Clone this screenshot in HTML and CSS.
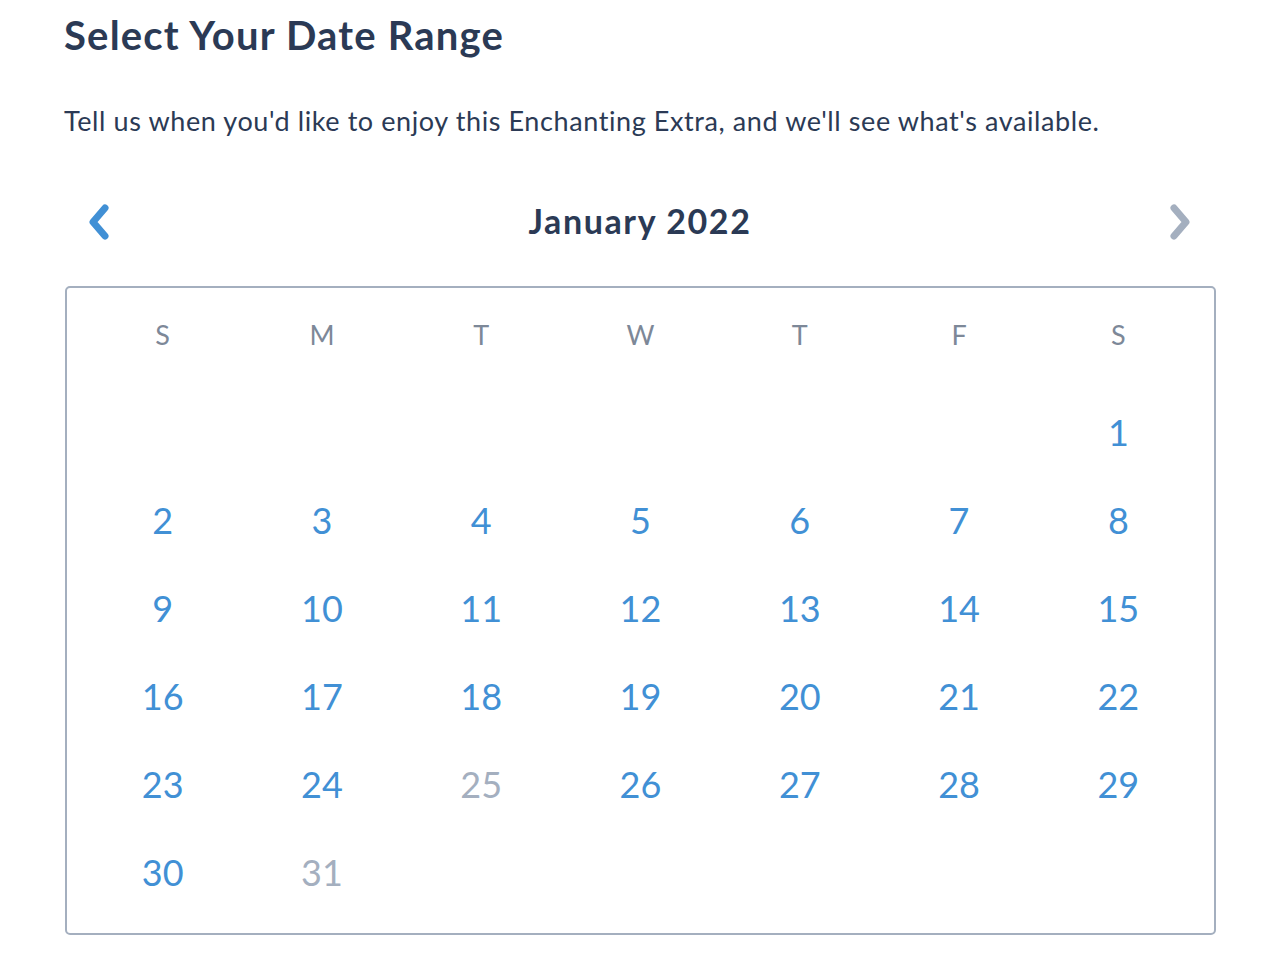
FILE: index.html
```html
<!DOCTYPE html>
<html lang="en">
<head>
<meta charset="utf-8">
<title>Select Your Date Range</title>
<link rel="stylesheet" href="styles.css">
</head>
<body>
<main class="page">
  <h1 class="title">Select Your Date Range</h1>
  <p class="intro">Tell us when you'd like to enjoy this Enchanting Extra, and we'll see what's available.</p>
  <div class="month-nav">
    <button class="nav-btn prev" aria-label="Previous month">
      <svg width="30" height="40" viewBox="0 0 30 40"><polyline points="21,6 9,20 21,34" fill="none" stroke="#4190d5" stroke-width="7" stroke-linecap="round" stroke-linejoin="round"/></svg>
    </button>
    <h2 class="month">January 2022</h2>
    <button class="nav-btn next" aria-label="Next month">
      <svg width="30" height="40" viewBox="0 0 30 40"><polyline points="8,6 20,20 8,34" fill="none" stroke="#a4afbf" stroke-width="7" stroke-linecap="round" stroke-linejoin="round"/></svg>
    </button>
  </div>
  <div class="calendar">
    <div class="grid weekdays">
      <span>S</span><span>M</span><span>T</span><span>W</span><span>T</span><span>F</span><span>S</span>
    </div>
    <div class="grid days">
      <span></span><span></span><span></span><span></span><span></span><span></span><span class="day">1</span>
      <span class="day">2</span><span class="day">3</span><span class="day">4</span><span class="day">5</span><span class="day">6</span><span class="day">7</span><span class="day">8</span>
      <span class="day">9</span><span class="day">10</span><span class="day">11</span><span class="day">12</span><span class="day">13</span><span class="day">14</span><span class="day">15</span>
      <span class="day">16</span><span class="day">17</span><span class="day">18</span><span class="day">19</span><span class="day">20</span><span class="day">21</span><span class="day">22</span>
      <span class="day">23</span><span class="day">24</span><span class="day off">25</span><span class="day">26</span><span class="day">27</span><span class="day">28</span><span class="day">29</span>
      <span class="day">30</span><span class="day off">31</span>
    </div>
  </div>
</main>
</body>
</html>
```
FILE: styles.css
```css
* { box-sizing: border-box; }
body {
  margin: 0;
  background: #fff;
  font-family: Lato, "Noto Sans", sans-serif;
  color: #2b3a55;
}
.page {
  width: 1216px;
  padding: 10px 0 0 64px;
}
.title {
  margin: 0;
  font-size: 40px;
  font-weight: 700;
  line-height: 50px;
  letter-spacing: 1.2px;
  color: #2b3a55;
}
.intro {
  margin: 43px 0 0;
  font-size: 27px;
  line-height: 36px;
  letter-spacing: 0.6px;
  color: #2b3a55;
}
.month-nav {
  display: flex;
  align-items: center;
  justify-content: space-between;
  margin-top: 51px;
  padding: 0 20px 0 20px;
  height: 60px;
}
.nav-btn {
  border: 0;
  background: none;
  padding: 0;
  width: 30px;
  height: 40px;
  display: flex;
  cursor: pointer;
  margin-top: 4px;
}
.month {
  margin: 0;
  font-size: 34px;
  font-weight: 700;
  letter-spacing: 1.6px;
  color: #2b3a55;
}
.calendar {
  margin-top: 36px;
  margin-left: 1px;
  width: 1151px;
  height: 649px;
  border: 2px solid #a4afbf;
  border-radius: 5px;
  padding: 22px 16px 0;
}
.grid {
  display: grid;
  grid-template-columns: repeat(7, 1fr);
  text-align: center;
}
.weekdays span {
  font-size: 27px;
  line-height: 50px;
  color: #7d8898;
}
.days {
  margin-top: 28px;
  grid-auto-rows: 88px;
}
.day {
  font-size: 36px;
  line-height: 88px;
  color: #4190d5;
}
.day.off { color: #a4afbf; }
```
